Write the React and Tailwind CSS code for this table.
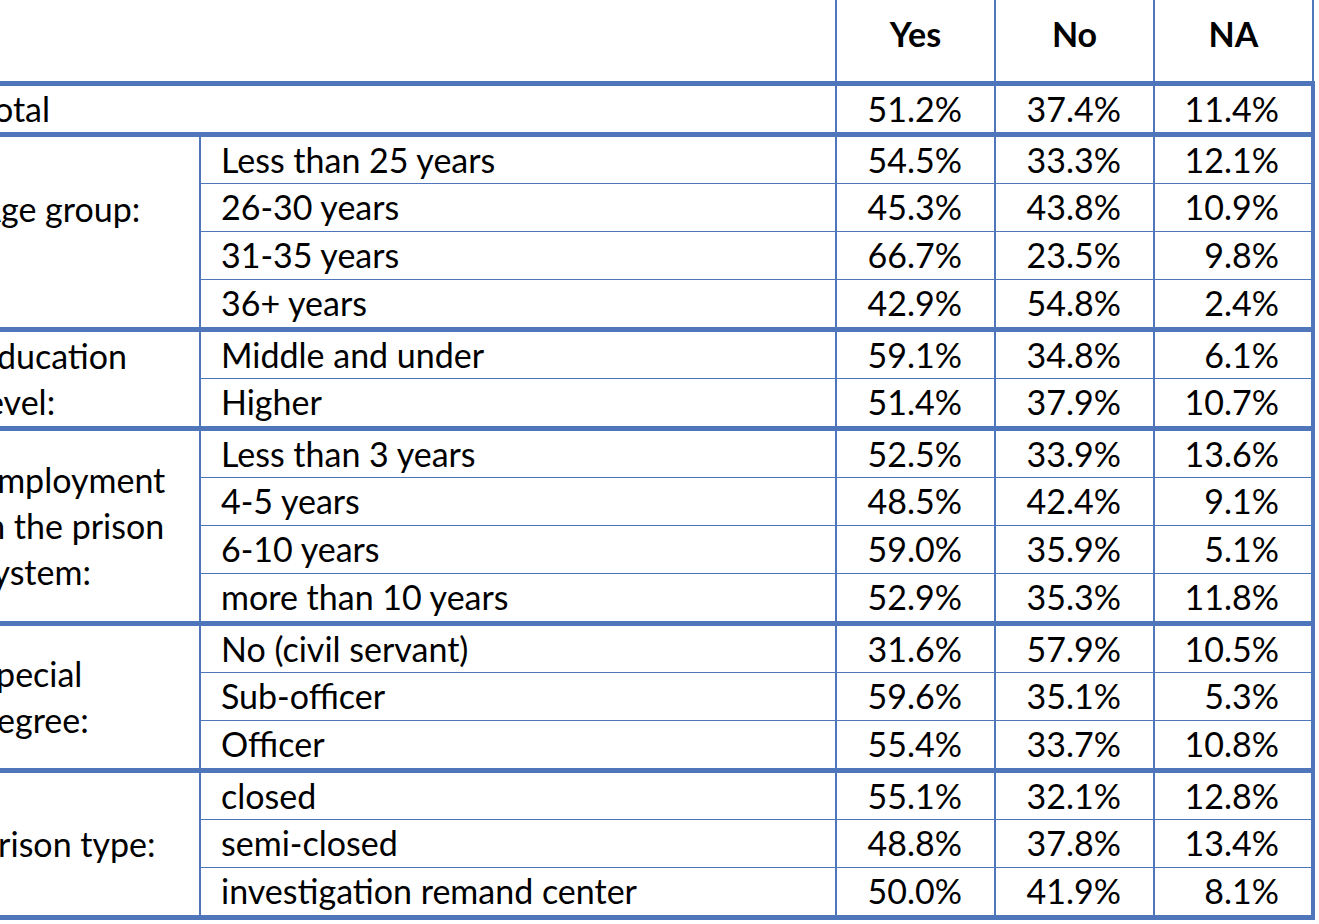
const groups = [
  {
    label: ["Age group:", "\u00a0"],
    rows: [
      ["Less than 25 years", "54.5%", "33.3%", "12.1%"],
      ["26-30 years", "45.3%", "43.8%", "10.9%"],
      ["31-35 years", "66.7%", "23.5%", "9.8%"],
      ["36+ years", "42.9%", "54.8%", "2.4%"],
    ],
  },
  {
    label: ["Education", "level:"],
    rows: [
      ["Middle and under", "59.1%", "34.8%", "6.1%"],
      ["Higher", "51.4%", "37.9%", "10.7%"],
    ],
  },
  {
    label: ["Employment", "in the prison", "system:"],
    rows: [
      ["Less than 3 years", "52.5%", "33.9%", "13.6%"],
      ["4-5 years", "48.5%", "42.4%", "9.1%"],
      ["6-10 years", "59.0%", "35.9%", "5.1%"],
      ["more than 10 years", "52.9%", "35.3%", "11.8%"],
    ],
  },
  {
    label: ["Special", "degree:"],
    rows: [
      ["No (civil servant)", "31.6%", "57.9%", "10.5%"],
      ["Sub-officer", "59.6%", "35.1%", "5.3%"],
      ["Officer", "55.4%", "33.7%", "10.8%"],
    ],
  },
  {
    label: ["Prison type:"],
    rows: [
      ["closed", "55.1%", "32.1%", "12.8%"],
      ["semi-closed", "48.8%", "37.8%", "13.4%"],
      ["investigation remand center", "50.0%", "41.9%", "8.1%"],
    ],
  },
];

const line = "border-[#4f76bb]";

export default function App() {
  return (
    <div className="w-[1319px] h-[924px] overflow-hidden bg-white font-['Lato',sans-serif] text-[34px] text-black">
      <table className="ml-[-36px] border-collapse table-fixed w-[1349px] leading-[46px]">
        <colgroup>
          <col className="w-[236px]" />
          <col className="w-[636px]" />
          <col className="w-[159px]" />
          <col className="w-[159px]" />
          <col className="w-[159px]" />
        </colgroup>
        <thead>
          <tr className={"h-[83px] border-b-[5px] " + line}>
            <th colSpan={2}></th>
            {["Yes", "No", "NA"].map((h) => (
              <th key={h} className={"align-top pt-[11px] font-bold text-center border-x-2 " + line}>
                {h}
              </th>
            ))}
          </tr>
        </thead>
        <tbody className={"border-r-4 " + line}>
          <tr className={"border-b-[5px] " + line}>
            <td colSpan={2} className="h-[48px] pl-[14px]">Total</td>
            {["51.2%", "37.4%", "11.4%"].map((v, i) => (
              <td key={i} className={"h-[48px] pr-[32px] text-right border-x-2 " + line}>{v}</td>
            ))}
          </tr>
          {groups.map((g, gi) =>
            g.rows.map((r, ri) => {
              const last = ri === g.rows.length - 1;
              const h = last ? "h-[50px]" : "h-[48px]";
              return (
                <tr key={gi + "-" + ri} className={(last ? "border-b-[5px] " : "border-b ") + line}>
                  {ri === 0 && (
                    <td rowSpan={g.rows.length} className={"pl-[14px] align-middle border-r-2 " + line}>
                      {g.label.map((l, li) => (
                        <div key={li}>{l}</div>
                      ))}
                    </td>
                  )}
                  <td className={h + " pl-[20px] border-x-2 " + line}>{r[0]}</td>
                  {r.slice(1).map((v, i) => (
                    <td key={i} className={h + " pr-[32px] text-right border-x-2 " + line}>{v}</td>
                  ))}
                </tr>
              );
            })
          )}
        </tbody>
      </table>
    </div>
  );
}
